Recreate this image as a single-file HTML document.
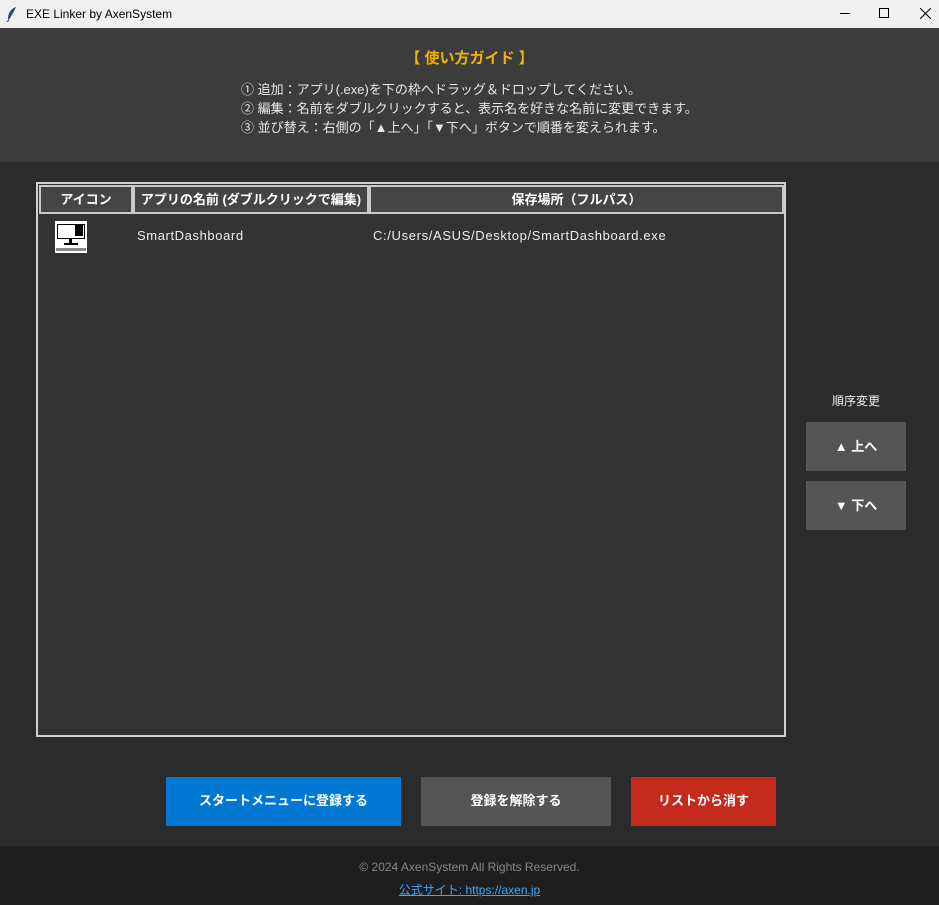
<!DOCTYPE html>
<html><head><meta charset="utf-8"><style>
*{margin:0;padding:0;box-sizing:border-box}
body{width:939px;height:905px;overflow:hidden;background:#2b2b2b;font-family:"Liberation Sans","Noto Sans CJK JP",sans-serif;position:relative;color:#fff}
.abs{position:absolute}
.tb{left:0;top:0;width:939px;height:28px;background:#f0f0f0;color:#000;font-size:12px}
.hdr{left:0;top:28px;width:939px;height:134px;background:#3c3c3c}
.guide{font-size:13px;color:#e8e8e8;line-height:19px}
.tbl{left:36px;top:182px;width:750px;height:555px;background:#333;border:2px solid #d0d0d0}
.th{top:1px;height:29px;background:#454545;border:2px solid #c8c8c8;font-size:13px;font-weight:bold;text-align:center;line-height:25px;color:#fff}
.btn{font-size:13px;font-weight:bold;text-align:center;color:#fff}
.foot{left:0;top:846px;width:939px;height:59px;background:#1e1e1e}
</style></head><body>
<div class="abs tb">
 <svg class="abs" style="left:6px;top:6px" width="12" height="16" viewBox="0 0 12 16"><path d="M10 1 C4 3 2 8 2 13 L3 14 C5 10 8 6 10 1Z" fill="#2a4a8a"/><path d="M3 14 L1 16" stroke="#333" stroke-width="1"/></svg>
 <div class="abs" style="left:26px;top:7px">EXE Linker by AxenSystem</div>
 <div class="abs" style="left:840px;top:13px;width:10px;height:1px;background:#000"></div>
 <div class="abs" style="left:879px;top:8px;width:10px;height:10px;border:1px solid #000"></div>
 <svg class="abs" style="left:920px;top:8px" width="11" height="11"><path d="M0 0L11 11M11 0L0 11" stroke="#000" stroke-width="1"/></svg>
</div>
<div class="abs hdr">
 <div class="abs" style="left:0;width:939px;top:19px;text-align:center;color:#f0b400;font-weight:bold;font-size:15px">【 使い方ガイド 】</div>
 <div class="abs guide" style="left:241px;top:52px">① 追加：アプリ(.exe)を下の枠へドラッグ＆ドロップしてください。<br>② 編集：名前をダブルクリックすると、表示名を好きな名前に変更できます。<br>③ 並び替え：右側の「▲上へ」「▼下へ」ボタンで順番を変えられます。</div>
</div>
<div class="abs tbl">
 <div class="abs th" style="left:1px;width:94px">アイコン</div>
 <div class="abs th" style="left:95px;width:236px">アプリの名前 (ダブルクリックで編集)</div>
 <div class="abs th" style="left:331px;width:415px">保存場所（フルパス）</div>
 <div class="abs" style="left:17px;top:37px;width:32px;height:32px;background:#fff">
  <div class="abs" style="left:2px;top:3px;width:28px;height:15px;border:1px solid #000"></div>
  <div class="abs" style="left:20px;top:3px;width:8px;height:12px;background:#000"></div>
  <div class="abs" style="left:14px;top:18px;width:3px;height:4px;background:#000"></div>
  <div class="abs" style="left:9px;top:22px;width:14px;height:2px;background:#000"></div>
  <div class="abs" style="left:1px;top:27px;width:30px;height:3px;background:#888"></div>
 </div>
 <div class="abs" style="left:99px;top:44px;font-size:13px;color:#eee;letter-spacing:0.6px">SmartDashboard</div>
 <div class="abs" style="left:335px;top:44px;font-size:13px;color:#eee;letter-spacing:0.65px">C:/Users/ASUS/Desktop/SmartDashboard.exe</div>
</div>
<div class="abs" style="left:806px;width:100px;top:392px;text-align:center;font-size:12px;color:#eee">順序変更</div>
<div class="abs btn" style="left:806px;top:422px;width:100px;height:49px;line-height:49px;background:#555">▲ 上へ</div>
<div class="abs btn" style="left:806px;top:481px;width:100px;height:49px;line-height:49px;background:#555">▼ 下へ</div>
<div class="abs btn" style="left:166px;top:777px;width:235px;height:49px;line-height:47px;background:#0078d4">スタートメニューに登録する</div>
<div class="abs btn" style="left:421px;top:777px;width:190px;height:49px;line-height:47px;background:#555">登録を解除する</div>
<div class="abs btn" style="left:631px;top:777px;width:145px;height:49px;line-height:47px;background:#c42b1c">リストから消す</div>
<div class="abs foot">
 <div class="abs" style="left:0;width:939px;top:14px;text-align:center;font-size:12px;color:#888">© 2024 AxenSystem All Rights Reserved.</div>
 <div class="abs" style="left:0;width:939px;top:35px;text-align:center;font-size:12px;color:#3ea6ff;text-decoration:underline">公式サイト: https://axen.jp</div>
</div>
</body></html>
